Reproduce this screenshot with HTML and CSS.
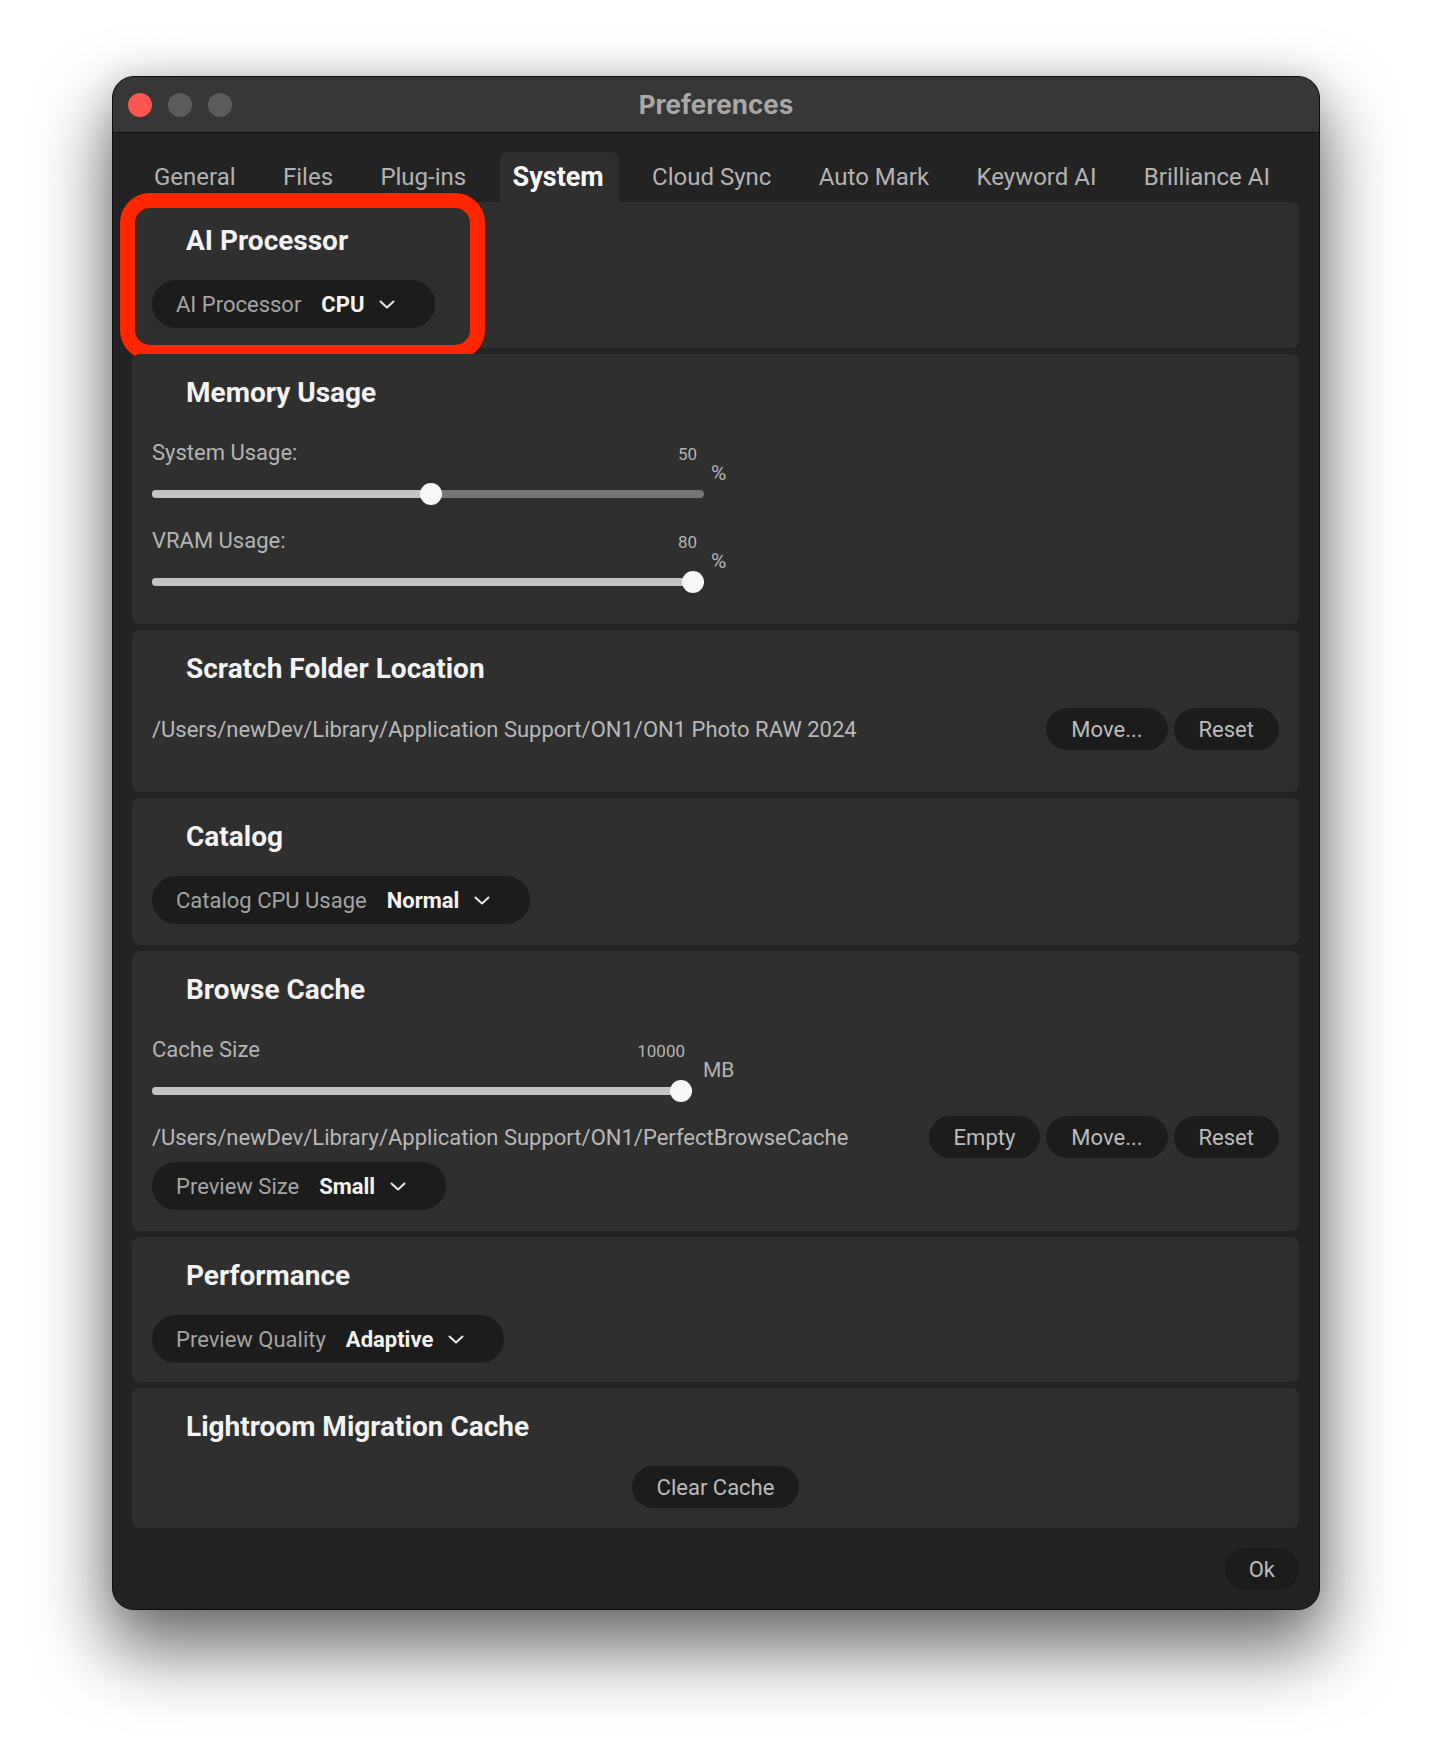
FILE: index.html
```html
<!DOCTYPE html>
<html lang="en">
<head>
    <meta charset="UTF-8">
    <title>Preferences</title>
    <link rel="stylesheet" href="styles.css">
</head>
<body>
<div class="desk">
    <div class="window">
        <!-- title bar -->
        <div class="titlebar">
            <div class="lights">
                <span class="light close"></span>
                <span class="light"></span>
                <span class="light"></span>
            </div>
            <div class="wintitle">Preferences</div>
        </div>

        <div class="content">
            <ul class="tabs">
                <li>General</li>
                <li>Files</li>
                <li>Plug-ins</li>
                <li class="active">System</li>
                <li>Cloud Sync</li>
                <li>Auto Mark</li>
                <li>Keyword AI</li>
                <li>Brilliance AI</li>
            </ul>

            <div class="panels">
                <section class="panel p-ai">
                    <h2>AI Processor</h2>
                    <div class="select">
                        <span class="select-label">AI Processor</span>
                        <span class="select-value">CPU</span>
                        <svg class="chev" width="16" height="9" viewBox="0 0 16 9"><path d="M1.5 1.5 8 7.5 14.5 1.5"/></svg>
                    </div>
                    <div class="highlight"></div>
                </section>

                <section class="panel p-mem">
                    <h2>Memory Usage</h2>
                    <div class="slider-row">
                        <div class="slider">
                            <div class="slider-head">
                                <span class="slider-label">System Usage:</span>
                                <span class="slider-value">50</span>
                            </div>
                            <div class="slider-bar" style="--pos:.505">
                                <div class="slider-track"><div class="slider-fill"></div></div>
                                <span class="slider-thumb"></span>
                            </div>
                        </div>
                        <span class="slider-unit">%</span>
                    </div>
                    <div class="slider-row">
                        <div class="slider">
                            <div class="slider-head">
                                <span class="slider-label">VRAM Usage:</span>
                                <span class="slider-value">80</span>
                            </div>
                            <div class="slider-bar" style="--pos:1">
                                <div class="slider-track"><div class="slider-fill"></div></div>
                                <span class="slider-thumb"></span>
                            </div>
                        </div>
                        <span class="slider-unit">%</span>
                    </div>
                </section>

                <section class="panel p-scratch">
                    <h2>Scratch Folder Location</h2>
                    <div class="path-row">
                        <span class="path">/Users/newDev/Library/Application Support/ON1/ON1 Photo RAW 2024</span>
                        <div class="btns">
                            <button class="btn">Move...</button>
                            <button class="btn">Reset</button>
                        </div>
                    </div>
                </section>

                <section class="panel p-catalog">
                    <h2>Catalog</h2>
                    <div class="select">
                        <span class="select-label">Catalog CPU Usage</span>
                        <span class="select-value">Normal</span>
                        <svg class="chev" width="16" height="9" viewBox="0 0 16 9"><path d="M1.5 1.5 8 7.5 14.5 1.5"/></svg>
                    </div>
                </section>

                <section class="panel p-cache">
                    <h2>Browse Cache</h2>
                    <div class="slider-row">
                        <div class="slider slider-short">
                            <div class="slider-head">
                                <span class="slider-label">Cache Size</span>
                                <span class="slider-value">10000</span>
                            </div>
                            <div class="slider-bar" style="--pos:1">
                                <div class="slider-track"><div class="slider-fill"></div></div>
                                <span class="slider-thumb"></span>
                            </div>
                        </div>
                        <span class="slider-unit unit-mb">MB</span>
                    </div>
                    <div class="path-row cache-path">
                        <span class="path">/Users/newDev/Library/Application Support/ON1/PerfectBrowseCache</span>
                        <div class="btns">
                            <button class="btn">Empty</button>
                            <button class="btn">Move...</button>
                            <button class="btn">Reset</button>
                        </div>
                    </div>
                    <div class="select select-tight">
                        <span class="select-label">Preview Size</span>
                        <span class="select-value">Small</span>
                        <svg class="chev" width="16" height="9" viewBox="0 0 16 9"><path d="M1.5 1.5 8 7.5 14.5 1.5"/></svg>
                    </div>
                </section>

                <section class="panel p-perf">
                    <h2>Performance</h2>
                    <div class="select">
                        <span class="select-label">Preview Quality</span>
                        <span class="select-value">Adaptive</span>
                        <svg class="chev" width="16" height="9" viewBox="0 0 16 9"><path d="M1.5 1.5 8 7.5 14.5 1.5"/></svg>
                    </div>
                </section>

                <section class="panel p-lr">
                    <h2>Lightroom Migration Cache</h2>
                    <div class="center-row">
                        <button class="btn">Clear Cache</button>
                    </div>
                </section>
            </div>

            <div class="footer">
                <button class="btn btn-ok">Ok</button>
            </div>
        </div>
    </div>
</div>
</body>
</html>
```

FILE: styles.css
```css
* {
    margin: 0;
    padding: 0;
    box-sizing: border-box;
}
body {
    background: #fff;
    font-family: Roboto, "Liberation Sans", sans-serif;
}
.desk {
    min-height: 1758px;
    padding: 76px 0 0 112px;
}
.window {
    width: 1208px;
    border: 1px solid #0d0d0d;
    border-radius: 22px;
    background: #232323;
    overflow: hidden;
    box-shadow: 0 36px 70px 6px rgba(0, 0, 0, 0.55), 0 0 30px rgba(0, 0, 0, 0.12);
}

/* title bar */
.titlebar {
    height: 56px;
    display: grid;
    grid-template-columns: 1fr auto 1fr;
    align-items: center;
    background: #373737;
    border-bottom: 1px solid #0f0f0f;
}
.lights {
    display: flex;
    gap: 16px;
    padding-left: 15px;
}
.light {
    width: 24px;
    height: 24px;
    border-radius: 50%;
    background: #5b5b5b;
}
.light.close {
    background: #fe5550;
}
.wintitle {
    font-family: Inter, Roboto, sans-serif;
    font-weight: 700;
    font-size: 26px;
    color: #a8a8a8;
}

.content {
    padding: 19px 20px 19px 19px;
}

/* tabs */
.tabs {
    list-style: none;
    display: flex;
    justify-content: space-between;
    height: 50px;
    margin: 0 15px 0 8px;
}
.tabs li {
    padding: 0 14px;
    line-height: 50px;
    font-size: 24px;
    color: #b3b3b3;
    border-radius: 8px 8px 0 0;
}
.tabs li.active {
    padding: 0 15px 0 13px;
    background: #2f2f2f;
    color: #fafafa;
    font-size: 27px;
    font-weight: 700;
}

/* panels */
.panels {
    display: flex;
    flex-direction: column;
    gap: 6px;
}
.panel {
    position: relative;
    background: #2f2f2f;
    border-radius: 8px;
    padding: 24px 20px 0;
}
.panel h2 {
    margin-left: 34px;
    font-size: 28px;
    line-height: 30px;
    font-weight: 700;
    color: #f3f3f3;
}
.p-ai { height: 146px; }
.p-mem { height: 270px; }
.p-scratch { height: 162px; }
.p-catalog { height: 147px; }
.p-cache { height: 280px; }
.p-perf { height: 145px; }
.p-lr { height: 140px; }

/* dropdown pill */
.select {
    display: inline-flex;
    align-items: center;
    height: 48px;
    margin-top: 24px;
    padding: 0 40px 0 24px;
    border-radius: 24px;
    background: #1c1c1c;
    font-size: 22px;
}
.select-label {
    color: #a4a4a4;
}
.select-value {
    margin-left: 20px;
    font-weight: 700;
    color: #f4f4f4;
}
.chev {
    margin-left: 15px;
    fill: none;
    stroke: #e8e8e8;
    stroke-width: 2;
    stroke-linecap: round;
    stroke-linejoin: round;
}
.select-tight {
    margin-top: 4px;
}

/* red annotation */
.highlight {
    position: absolute;
    left: -12px;
    top: -9px;
    width: 365px;
    height: 167px;
    border: 15px solid #ff2600;
    border-radius: 30px;
}

/* sliders */
.slider-row {
    display: flex;
    align-items: center;
    margin-top: 23px;
}
.panel h2 + .slider-row {
    margin-top: 32px;
}
.slider {
    width: 552px;
}
.slider-short {
    width: 540px;
}
.slider-head {
    display: flex;
    justify-content: space-between;
    align-items: baseline;
    height: 26px;
}
.slider-label {
    font-size: 22px;
    line-height: 26px;
    color: #b4b4b4;
}
.slider-value {
    padding-right: 7px;
    font-size: 17px;
    color: #b4b4b4;
}
.slider-bar {
    position: relative;
    height: 22px;
    margin-top: 17px;
    display: flex;
    align-items: center;
}
.slider-track {
    flex: 1;
    height: 8px;
    border-radius: 4px;
    background: #777;
    overflow: hidden;
}
.slider-fill {
    height: 100%;
    width: calc(var(--pos) * (100% - 22px) + 11px);
    background: #c3c3c3;
}
.slider-thumb {
    position: absolute;
    top: 0;
    left: calc(var(--pos) * (100% - 22px));
    width: 22px;
    height: 22px;
    border-radius: 50%;
    background: #f7f7f7;
}
.slider-unit {
    margin-left: 7px;
    font-size: 21px;
    color: #b4b4b4;
}
.unit-mb {
    margin-left: 11px;
}

/* path + buttons */
.path-row {
    display: flex;
    justify-content: space-between;
    align-items: center;
    margin-top: 24px;
}
.cache-path {
    margin-top: 14px;
}
.path {
    font-size: 22px;
    color: #b8b8b8;
}
.btns {
    display: flex;
    gap: 6px;
}
.btn {
    height: 42px;
    padding: 0 25px;
    border: none;
    border-radius: 21px;
    background: #1c1c1c;
    font-family: Roboto, "Liberation Sans", sans-serif;
    font-size: 22px;
    color: #bcbcbc;
}
.center-row {
    display: flex;
    justify-content: center;
    margin-top: 24px;
}

.footer {
    display: flex;
    justify-content: flex-end;
    margin-top: 20px;
}
.btn-ok {
    padding: 0 24px;
}
```
